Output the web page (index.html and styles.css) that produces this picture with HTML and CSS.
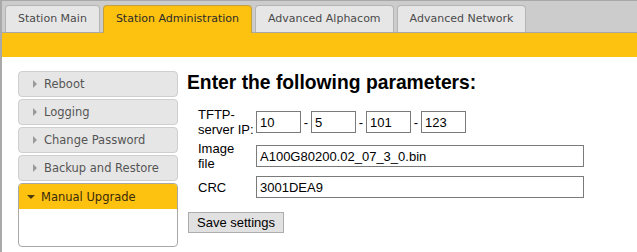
FILE: index.html
```html
<!DOCTYPE html>
<html>
<head>
<meta charset="utf-8">
<link rel="stylesheet" href="styles.css">
</head>
<body>
<div class="page">
  <div class="tabs">
    <div class="tab">Station Main</div>
    <div class="tab active">Station Administration</div>
    <div class="tab">Advanced Alphacom</div>
    <div class="tab">Advanced Network</div>
  </div>
  <div class="band"></div>
  <div class="content">
    <div class="sidebar">
      <div class="item"><span class="arrow"></span>Reboot</div>
      <div class="item"><span class="arrow"></span>Logging</div>
      <div class="item"><span class="arrow"></span>Change Password</div>
      <div class="item"><span class="arrow"></span>Backup and Restore</div>
      <div class="panel">
        <div class="item open"><span class="arrow down"></span>Manual Upgrade</div>
        <div class="panel-body"></div>
      </div>
    </div>
    <div class="main">
      <h1 class="title">Enter the following parameters:</h1>
      <div class="form">
        <div class="row">
          <div class="label">TFTP-<br>server IP:</div>
          <div class="ip">
            <input class="box short" value="10"><span class="dash">-</span>
            <input class="box short" value="5"><span class="dash">-</span>
            <input class="box short" value="101"><span class="dash">-</span>
            <input class="box short" value="123">
          </div>
        </div>
        <div class="row">
          <div class="label">Image<br>file</div>
          <input class="box long" value="A100G80200.02_07_3_0.bin">
        </div>
        <div class="row last">
          <div class="label">CRC</div>
          <input class="box long" value="3001DEA9">
        </div>
      </div>
      <button class="save">Save settings</button>
    </div>
  </div>
</div>
</body>
</html>
```
FILE: styles.css
```css
html, body {
  margin: 0;
  padding: 0;
  background: #ffffff;
}
.page {
  border-left: 2px solid #a9a9a9;
  min-height: 252px;
  box-sizing: border-box;
}
.tabs {
  display: flex;
  align-items: flex-end;
  gap: 3px;
  height: 31px;
  padding-left: 3px;
  background: #cccccc;
  border-top: 1px solid #a8a8a8;
  border-bottom: 1px solid #a8a8a8;
}
.tab {
  font-family: "DejaVu Sans", Verdana, sans-serif;
  font-size: 11px;
  color: #4a4a4a;
  height: 26px;
  line-height: 26px;
  padding: 0 12px;
  background: #e6e6e6;
  border: 1px solid #b4b4b4;
  border-bottom: none;
  border-radius: 4px 4px 0 0;
}
.tab.active {
  background: #fdc110;
  color: #2b2b2b;
  height: 27px;
  margin-bottom: -1px;
  border-color: #c0a040;
}
.band {
  height: 24px;
  background: #fdc110;
}
.content {
  display: flex;
  padding: 14px 0 0 16px;
}
.sidebar {
  width: 160px;
  display: flex;
  flex-direction: column;
  gap: 2px;
}
.item {
  font-family: "DejaVu Sans", Verdana, sans-serif;
  font-size: 11.5px;
  color: #555555;
  height: 26px;
  background: #e6e6e6;
  border: 1px solid #cfcfcf;
  border-radius: 4px;
  box-sizing: border-box;
  padding-left: 14px;
  display: flex;
  align-items: center;
}
.arrow {
  width: 0;
  height: 0;
  border-top: 4px solid transparent;
  border-bottom: 4px solid transparent;
  border-left: 4px solid #9a9a9a;
  margin-right: 7px;
}
.arrow.down {
  border-left: 4px solid transparent;
  border-right: 4px solid transparent;
  border-top: 4px solid #4a3a10;
  border-bottom: none;
  margin-right: 6px;
  margin-left: -2px;
}
.panel {
  border: 1px solid #a8a8a8;
  border-radius: 4px;
  overflow: hidden;
  height: 64px;
  box-sizing: border-box;
}
.item.open {
  background: #fdc110;
  border: none;
  border-radius: 0;
  color: #3a2a0a;
  height: 25px;
  padding-left: 10px;
}
.main {
  margin-left: 9px;
  font-family: "Liberation Sans", Arial, sans-serif;
}
.title {
  font-size: 19.3px;
  font-weight: bold;
  margin: 0;
  line-height: 24px;
  color: #000;
}
.form {
  margin-top: 12px;
  padding-left: 11px;
  display: flex;
  flex-direction: column;
  gap: 4px;
}
.row {
  display: flex;
  align-items: center;
}
.row.last {
  margin-top: 1px;
}
.label {
  width: 58px;
  font-size: 13px;
  line-height: 15px;
  color: #000;
}
.ip {
  display: flex;
  align-items: center;
}
.box {
  font-family: "Liberation Sans", Arial, sans-serif;
  font-size: 13px;
  height: 22px;
  box-sizing: border-box;
  border: 1px solid #7a7a7a;
  padding: 0 3px;
  margin: 0;
  color: #000;
  background: #fff;
  outline: none;
}
.short {
  width: 45px;
}
.dash {
  font-size: 13px;
  width: 10px;
  text-align: center;
}
.long {
  width: 328px;
}
.save {
  margin: 14px 0 0 1px;
  font-family: "Liberation Sans", Arial, sans-serif;
  font-size: 13px;
  height: 21px;
  padding: 0 8px;
  background: #e1e1e1;
  border: 1px solid #adadad;
  color: #000;
}
```
